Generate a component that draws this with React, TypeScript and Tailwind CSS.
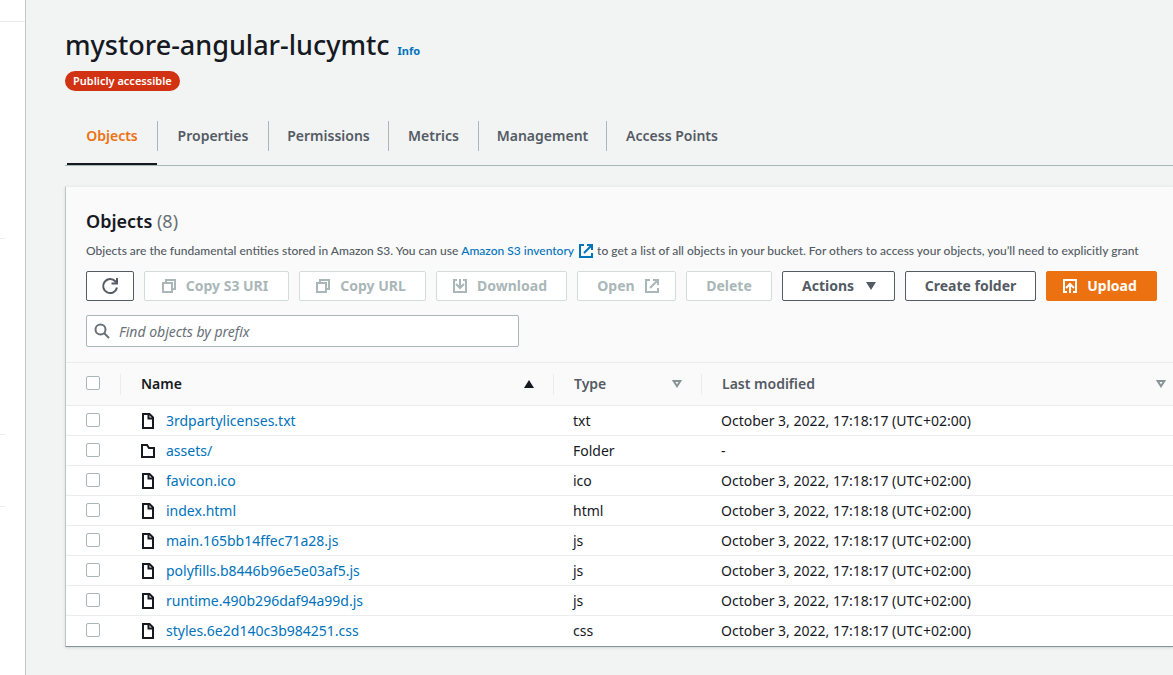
import React from "react";

type IconProps = { className?: string };

function Icon({ className = "", children }: React.PropsWithChildren<IconProps>) {
  return (
    <svg
      viewBox="0 0 16 16"
      className={`h-4 w-4 shrink-0 ${className}`}
      fill="none"
      stroke="currentColor"
      strokeWidth="2"
      aria-hidden="true"
    >
      {children}
    </svg>
  );
}

const FileIcon = () => (
  <Icon>
    <path d="M3 1h6.5L13 4.5V15H3z" />
    <path d="M8.5 1v4.5H13" />
  </Icon>
);

const FolderIcon = () => (
  <Icon>
    <path d="M2 14V2h5l2 3h5v9z" />
  </Icon>
);

const CopyIcon = () => (
  <Icon>
    <path d="M2 5h9v9H2z" />
    <path d="M5 5V2h9v9h-3" />
  </Icon>
);

const DownloadIcon = () => (
  <Icon>
    <path d="M5 2H2v12h12V2h-3" />
    <path d="M8 1v9M4 6l4 4 4-4" />
  </Icon>
);

const UploadIcon = () => (
  <Icon>
    <path d="M5 14H2V2h12v12h-3" />
    <path d="M8 15V6M4 10l4-4 4 4" />
  </Icon>
);

const ExternalIcon = () => (
  <Icon>
    <path d="M6 2H2v12h12v-4" />
    <path d="M9 2h5v5M6 10l8-8" />
  </Icon>
);

const RefreshIcon = () => (
  <svg viewBox="0 0 18 18" className="h-[18px] w-[18px]" fill="none" stroke="currentColor" strokeWidth="2" aria-hidden="true">
    <path d="M16 10.5A7 7 0 1 1 14.5 4.5L16 6" />
    <path d="M16 1v5.5h-5.5" />
  </svg>
);

const SearchIcon = () => (
  <Icon>
    <circle cx="6.5" cy="6.5" r="5" />
    <path d="M10 10l5 5" />
  </Icon>
);

const SortUp = () => (
  <svg viewBox="0 0 10 8" className="h-2 w-[10px]" fill="currentColor" aria-hidden="true">
    <path d="M5 0l5 8H0z" />
  </svg>
);

const SortDown = () => (
  <svg viewBox="0 0 10 8" className="h-2 w-[10px] text-[#879596]" fill="none" stroke="currentColor" strokeWidth="2" aria-hidden="true">
    <path d="M1.7 1h6.6L5 6.2z" />
  </svg>
);

const tabs = [
  { label: "Objects", width: "w-[90px]" },
  { label: "Properties", width: "w-[111px]" },
  { label: "Permissions", width: "w-[120px]" },
  { label: "Metrics", width: "w-[90px]" },
  { label: "Management", width: "w-[128px]" },
  { label: "Access Points", width: "w-[131px]" },
];

const rows = [
  { name: "3rdpartylicenses.txt", type: "txt", modified: "October 3, 2022, 17:18:17 (UTC+02:00)" },
  { name: "assets/", type: "Folder", modified: "-" },
  { name: "favicon.ico", type: "ico", modified: "October 3, 2022, 17:18:17 (UTC+02:00)" },
  { name: "index.html", type: "html", modified: "October 3, 2022, 17:18:18 (UTC+02:00)" },
  { name: "main.165bb14ffec71a28.js", type: "js", modified: "October 3, 2022, 17:18:17 (UTC+02:00)" },
  { name: "polyfills.b8446b96e5e03af5.js", type: "js", modified: "October 3, 2022, 17:18:17 (UTC+02:00)" },
  { name: "runtime.490b296daf94a99d.js", type: "js", modified: "October 3, 2022, 17:18:17 (UTC+02:00)" },
  { name: "styles.6e2d140c3b984251.css", type: "css", modified: "October 3, 2022, 17:18:17 (UTC+02:00)" },
];

const buttonStyles = {
  normal: "border-[#545b64] bg-white text-[#545b64]",
  disabled: "border-[#d5dbdb] bg-white text-[#aab7b8]",
  primary: "border-[#ec7211] bg-[#ec7211] text-white",
};

const iconPadding = {
  none: "",
  left: "pr-1",
  right: "pl-1",
};

type ButtonProps = {
  kind?: keyof typeof buttonStyles;
  iconSide?: keyof typeof iconPadding;
  width: string;
  label?: string;
};

function Button({ kind = "normal", iconSide = "none", width, label, children }: React.PropsWithChildren<ButtonProps>) {
  return (
    <button
      type="button"
      disabled={kind === "disabled"}
      aria-label={label}
      className={`flex h-[30px] shrink-0 items-center justify-center gap-[9px] whitespace-nowrap rounded-[2px] border text-[14px] font-bold ${iconPadding[iconSide]} ${width} ${buttonStyles[kind]}`}
    >
      {children}
    </button>
  );
}

function Checkbox({ label }: { label: string }) {
  return (
    <input
      type="checkbox"
      aria-label={label}
      className="mb-0.5 block h-[14px] w-[14px] appearance-none rounded-[2px] border border-[#aab7b8] bg-white checked:bg-[#0073bb]"
    />
  );
}

function HeadCell({ title, icon, dark, last }: { title: string; icon: React.ReactNode; dark?: boolean; last?: boolean }) {
  return (
    <th scope="col" className="p-0 text-left font-semibold">
      <div className={`flex h-[42px] items-center pl-5 ${dark ? "text-[#16191f]" : "text-[#545b64]"} ${last ? "pr-[7px]" : ""}`}>
        <span className="grow">{title}</span>
        {icon}
        {!last && <span className="ml-[19px] h-[21px] w-px bg-[#eaeded]" />}
      </div>
    </th>
  );
}

export default function App() {
  return (
    <div className="flex min-h-screen bg-[#f2f3f3] font-['Noto_Sans',sans-serif] text-[14px] leading-5 text-[#16191f]">
      <aside className="w-[26px] shrink-0 border-r border-[#bfc6c6] bg-white">
        <div className="h-[22px] border-b border-[#eaeded]" />
        <div className="mr-5 h-[217px] border-b border-[#eaeded]" />
        <div className="mr-5 h-[196px] border-b border-[#eaeded]" />
        <div className="mr-5 h-[72px] border-b border-[#eaeded]" />
      </aside>

      <main className="min-w-0 grow overflow-hidden pl-[39px] pt-7">
        <header>
          <div className="flex items-baseline gap-2">
            <h1 className="text-[27px] font-medium leading-[34px]">mystore-angular-lucymtc</h1>
            <a href="#info" className="text-[11px] font-bold text-[#0073bb]">Info</a>
          </div>
          <span className="mt-[9px] flex h-5 w-fit items-center rounded-full bg-[#d13212] px-2 text-[11px] font-semibold text-white">
            Publicly accessible
          </span>
        </header>

        <nav className="mt-[30px] flex h-[45px] border-b border-[#aab7b8] pl-0.5">
          {tabs.map((tab, i) => (
            <a
              key={tab.label}
              href={`#${tab.label}`}
              className={`flex justify-center whitespace-nowrap font-semibold ${tab.width} ${
                i === 0 ? "border-b-2 border-[#16191f] text-[#ec7211]" : "text-[#545b64]"
              }`}
            >
              <span className={`flex h-[30px] w-full items-center justify-center ${i === 0 ? "" : "border-l border-[#aab7b8]"}`}>
                {tab.label}
              </span>
            </a>
          ))}
        </nav>

        <section className="mt-5 border-b border-l border-t border-b-[#879596] border-l-[#bfc6c6] border-t-[#eaeded] bg-white shadow-sm">
          <div className="border-b border-[#eaeded] bg-[#fafafa] pb-[15px] pl-5 pt-[23px]">
            <h2 className="text-[18px] font-semibold leading-[22px]">
              Objects <span className="font-normal text-[#687078]">(8)</span>
            </h2>
            <p className="mt-[9px] flex items-center whitespace-nowrap font-['Lato','Noto_Sans',sans-serif] text-[12px] font-medium leading-5 text-[#545b64]">
              Objects are the fundamental entities stored in Amazon S3. You can use&nbsp;
              <a href="#inventory" className="flex items-center gap-1 text-[#0073bb]">
                Amazon S3 inventory
                <ExternalIcon />
              </a>
              &nbsp;to get a list of all objects in your bucket. For others to access your objects, you’ll need to explicitly grant
            </p>
            <div className="mt-[10px] flex gap-[10px]">
              <Button width="w-12" label="Refresh"><RefreshIcon /></Button>
              <Button kind="disabled" iconSide="left" width="w-[145px]"><CopyIcon />Copy S3 URI</Button>
              <Button kind="disabled" iconSide="left" width="w-[127px]"><CopyIcon />Copy URL</Button>
              <Button kind="disabled" iconSide="left" width="w-[131px]"><DownloadIcon />Download</Button>
              <Button kind="disabled" iconSide="right" width="w-[99px]">Open<ExternalIcon /></Button>
              <Button kind="disabled" width="w-[86px]">Delete</Button>
              <Button iconSide="right" width="w-[113px]">
                Actions
                <svg viewBox="0 0 16 16" className="h-4 w-4" fill="currentColor" aria-hidden="true">
                  <path d="M3 4h10l-5 8z" />
                </svg>
              </Button>
              <Button width="w-[131px]">Create folder</Button>
              <Button kind="primary" iconSide="left" width="w-[111px]"><UploadIcon />Upload</Button>
            </div>
            <label className="mt-[14px] flex h-8 w-[433px] items-center gap-[9px] rounded-[2px] border border-[#aab7b8] bg-white px-[7px] text-[#687078]">
              <SearchIcon />
              <input
                type="search"
                aria-label="Find objects by prefix"
                placeholder="Find objects by prefix"
                className="min-w-0 grow bg-transparent pt-0.5 italic outline-none placeholder:text-[#687078]"
              />
            </label>
          </div>

          <table className="w-full table-fixed border-collapse">
            <colgroup>
              <col className="w-[55px]" />
              <col className="w-[433px]" />
              <col className="w-[148px]" />
              <col />
            </colgroup>
            <thead>
              <tr className="border-b border-[#eaeded] bg-[#fafafa]">
                <th scope="col" className="p-0">
                  <div className="flex h-[42px] items-center justify-between pl-5">
                    <Checkbox label="Select all objects" />
                    <span className="h-[21px] w-px bg-[#eaeded]" />
                  </div>
                </th>
                <HeadCell title="Name" icon={<SortUp />} dark />
                <HeadCell title="Type" icon={<SortDown />} />
                <HeadCell title="Last modified" icon={<SortDown />} last />
              </tr>
            </thead>
            <tbody>
              {rows.map((row) => (
                <tr key={row.name} className="h-[30px] border-b border-[#eaeded] last:border-b-0">
                  <td className="p-0 pl-5"><Checkbox label={`Select ${row.name}`} /></td>
                  <td className="p-0 pl-[19px]">
                    <div className="flex items-center gap-[10px]">
                      {row.type === "Folder" ? <FolderIcon /> : <FileIcon />}
                      <a href={`#${row.name}`} className="text-[#0073bb]">{row.name}</a>
                    </div>
                  </td>
                  <td className="p-0 pl-[19px]">{row.type}</td>
                  <td className="whitespace-nowrap p-0 pl-[19px]">{row.modified}</td>
                </tr>
              ))}
            </tbody>
          </table>
        </section>
      </main>
    </div>
  );
}
